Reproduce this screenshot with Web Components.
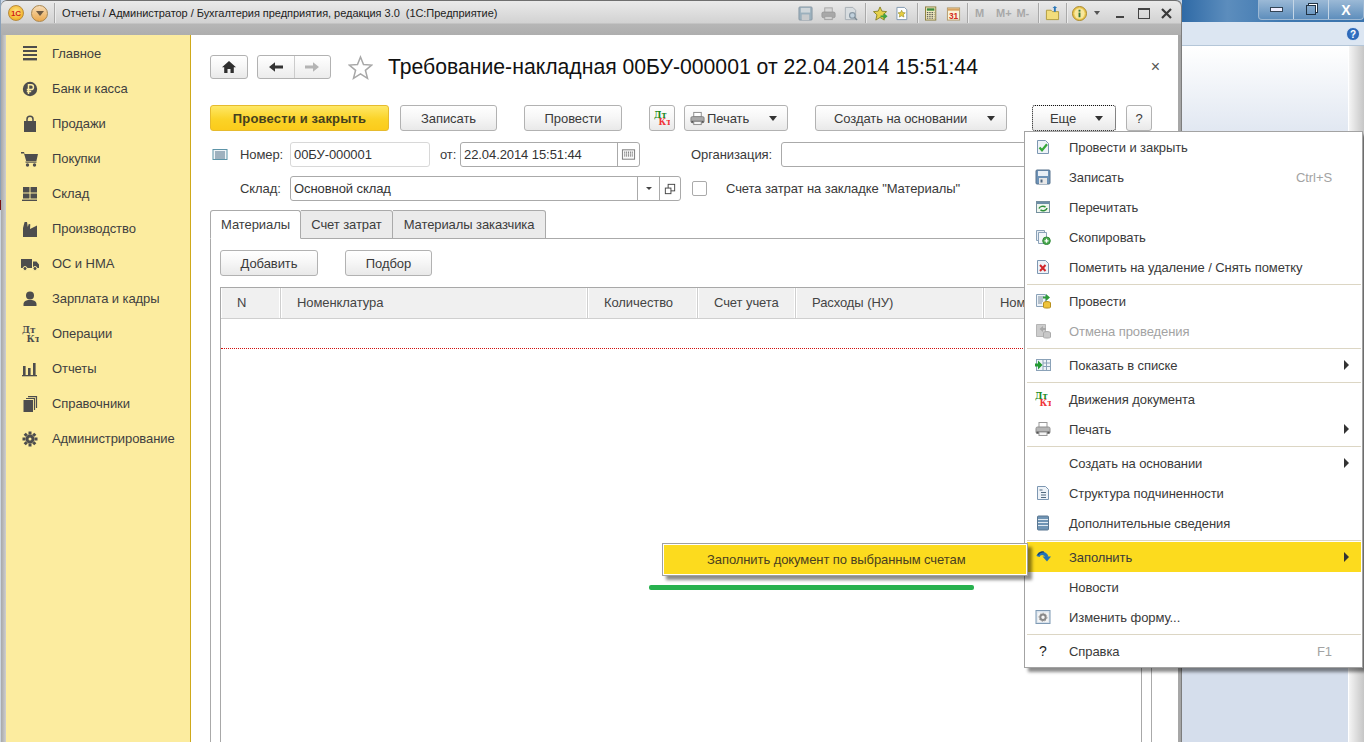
<!DOCTYPE html>
<html lang="ru"><head><meta charset="utf-8"><title>1С</title>
<style>
html,body{margin:0;padding:0;height:100%;overflow:hidden;background:#fff}
body{font:13px "Liberation Sans",Arial,sans-serif;color:#3a3a3a;letter-spacing:-.08px}
</style></head><body>
<x-desktop>
  <x-window>
    <x-titlebar slot="title">Отчеты / Администратор / Бухгалтерия предприятия, редакция 3.0&nbsp; (1С:Предприятие)</x-titlebar>
    <x-sidebar>
      <x-nav icon="main">Главное</x-nav>
      <x-nav icon="ruble">Банк и касса</x-nav>
      <x-nav icon="bag">Продажи</x-nav>
      <x-nav icon="cart">Покупки</x-nav>
      <x-nav icon="stock">Склад</x-nav>
      <x-nav icon="factory">Производство</x-nav>
      <x-nav icon="truck">ОС и НМА</x-nav>
      <x-nav icon="person">Зарплата и кадры</x-nav>
      <x-nav icon="dtkt">Операции</x-nav>
      <x-nav icon="bars">Отчеты</x-nav>
      <x-nav icon="books">Справочники</x-nav>
      <x-nav icon="gear">Администрирование</x-nav>
    </x-sidebar>
    <x-form></x-form>
  </x-window>
  <x-backwin></x-backwin>
  <x-menu>
    <x-mi icon="m-check">Провести и закрыть</x-mi>
    <x-mi icon="m-save" key="Ctrl+S">Записать</x-mi>
    <x-mi icon="m-reread">Перечитать</x-mi>
    <x-mi icon="m-copy">Скопировать</x-mi>
    <x-mi icon="m-del">Пометить на удаление / Снять пометку</x-mi>
    <x-sep></x-sep>
    <x-mi icon="m-post">Провести</x-mi>
    <x-mi icon="m-unpost" disabled>Отмена проведения</x-mi>
    <x-sep></x-sep>
    <x-mi icon="m-list" arrow>Показать в списке</x-mi>
    <x-sep></x-sep>
    <x-mi icon="m-dtkt">Движения документа</x-mi>
    <x-mi icon="m-print" arrow>Печать</x-mi>
    <x-sep></x-sep>
    <x-mi arrow>Создать на основании</x-mi>
    <x-mi icon="m-tree">Структура подчиненности</x-mi>
    <x-mi icon="m-info">Дополнительные сведения</x-mi>
    <x-sep></x-sep>
    <x-mi icon="m-fill" arrow active>Заполнить</x-mi>
    <x-mi>Новости</x-mi>
    <x-mi icon="m-form">Изменить форму...</x-mi>
    <x-sep></x-sep>
    <x-mi icon="m-q" key="F1">Справка</x-mi>
  </x-menu>
  <x-submenu>Заполнить документ по выбранным счетам</x-submenu>
  <x-underline></x-underline>
</x-desktop>
<script>
const G='#4d4d4d';
const ICONS={
 main:`<g fill="${G}"><rect x="2" y="1" width="14" height="2"/><rect x="2" y="5" width="14" height="2"/><rect x="2" y="9" width="14" height="2"/><rect x="2" y="13" width="14" height="2.4"/></g>`,
 ruble:`<circle cx="9" cy="9" r="7.2" fill="${G}"/><path d="M7.5 14V4.8h2.6a2.3 2.3 0 0 1 0 4.7H5.8M5.8 11.6h4.4" fill="none" stroke="#fcec9f" stroke-width="1.5"/>`,
 bag:`<path d="M3 6h12v11H3z" fill="${G}"/><path d="M6 8V4.3a3 3 0 0 1 6 0V8" fill="none" stroke="${G}" stroke-width="1.5"/>`,
 cart:`<path d="M0 2h3l.6 2H17l-1.6 7H5.2L3 3.4H0z" fill="${G}"/><rect x="4.5" y="11.5" width="11" height="1.2" fill="${G}"/><circle cx="6.5" cy="15" r="1.7" fill="${G}"/><circle cx="13.5" cy="15" r="1.7" fill="${G}"/>`,
 stock:`<g fill="${G}"><rect x="2" y="2" width="6.5" height="5.5"/><rect x="9.5" y="2" width="6.5" height="5.5"/><rect x="2" y="8.5" width="6.5" height="5"/><rect x="9.5" y="8.5" width="6.5" height="5"/><rect x="1" y="14.6" width="15" height="1.4"/></g>`,
 factory:`<path d="M2 17V8l1.6-6H6l.8 5 .9-3 1.6.3L9 9l7-3.5V17z" fill="${G}"/>`,
 truck:`<path d="M0 4h11v9H0zM12 6.5h3.5L18 9.5V13h-6z" fill="${G}"/><circle cx="4" cy="13.5" r="2" fill="${G}" stroke="#fcec9f"/><circle cx="14" cy="13.5" r="2" fill="${G}" stroke="#fcec9f"/>`,
 person:`<circle cx="9" cy="5.5" r="4" fill="${G}"/><path d="M2.5 16v-2c0-2.5 2.5-3.6 4.5-4h4c2 .4 4.5 1.5 4.5 4v2z" fill="${G}"/>`,
 dtkt:`<text x="1" y="8" font-size="9" font-weight="700" font-family="DejaVu Serif" letter-spacing="0" fill="${G}">Дт</text><text x="5.500" y="16.500" font-size="9" font-weight="700" font-family="DejaVu Serif" letter-spacing="0" fill="${G}">Кт</text>`,
 bars:`<g fill="${G}"><rect x="2" y="6" width="2.6" height="9"/><rect x="7" y="8" width="2.6" height="7"/><rect x="12" y="3" width="2.6" height="12"/><rect x="1" y="15" width="15" height="1.3"/></g>`,
 books:`<path d="M2.5 5h9.5v12H2.5z" fill="${G}"/><path d="M5 3.5h8.5V15M7 1.6h8.5V13" fill="none" stroke="${G}" stroke-width="1.2"/>`,
 gear:`<path d="M9 6a3 3 0 1 0 0 6 3 3 0 0 0 0-6z" fill="none" stroke="${G}" stroke-width="3"/><g stroke="${G}" stroke-width="3"><path d="M9 1.5v3M9 13.5v3M1.5 9h3M13.5 9h3M3.7 3.7l2.1 2.1M12.2 12.2l2.1 2.1M3.7 14.3l2.1-2.1M12.2 5.800l2.1-2.100"/></g>`,
 home:`<path d="M8 2l7 6.300h-2.200V14H9.500v-4h-3v4H3.200V8.300H1z" fill="#2f2f2f"/>`,
 back:`<path d="M1 8l6-4.800V6.400h8v3.200H7v3.200z" fill="#333"/>`,
 fwd:`<path d="M15 8L9 3.200V6.400H1v3.200h8v3.200z" fill="#b4b4b4"/>`,
 star:`<path d="M12.500 2l3 7.600 8.200.5-6.300 5.200 2.100 8-7-4.400-7 4.400 2.100-8L1.300 10.100l8.200-.5z" fill="#fff" stroke="#a8a8a8" stroke-width="1.500"/>`,
 doc:`<rect x="1" y="2.500" width="14" height="10" fill="#eef4f7" stroke="#5d94a8"/><path d="M3 5h10M3 7h10M3 9h10M3 11h10" stroke="#4f6f86"/>`,
 cal:`<rect x="1.500" y="3" width="13" height="10" fill="#f8f8f8" stroke="#777"/><path d="M3.500 5.500h9M3.500 7.500h9M3.500 9.500h9" stroke="#333" stroke-dasharray="1 1"/>`,
 open:`<rect x="5.500" y="2.500" width="7" height="7" fill="#fff" stroke="#444"/><rect x="2.500" y="6.500" width="6" height="6" fill="#fff" stroke="#444"/>`,
 print:`<rect x="4" y="1.500" width="8" height="5" fill="#fff" stroke="#888"/><rect x="1" y="6" width="14" height="6.500" rx="1.500" fill="#a9a9a9" stroke="#808080"/><rect x="1.500" y="10.500" width="13" height="2" fill="#5a5a5a"/><rect x="4" y="11" width="8" height="3.500" fill="#f4f4f4" stroke="#888"/>`,
 'm-dtkt':`<text x="0" y="7.500" font-size="8.500" font-weight="700" font-family="DejaVu Serif" letter-spacing="0" fill="#1c8a1c">Дт</text><text x="4.500" y="15" font-size="8.500" font-weight="700" font-family="DejaVu Serif" letter-spacing="0" fill="#f0353a">Кт</text>`,
 'm-check':`<path d="M2.500 1.500h8l3 3v10h-11z" fill="#eef3f8" stroke="#7d97b2"/><path d="M4.500 8.500l2.500 2.800 5-6" fill="none" stroke="#35a83a" stroke-width="2.200"/>`,
 'm-save':`<rect x="1" y="1" width="14" height="14" rx="1" fill="#6d93b8" stroke="#58728d"/><rect x="3" y="2" width="10" height="5" fill="#e8eff6"/><rect x="4" y="9" width="8" height="6" fill="#e7e7e7"/><rect x="5.500" y="10.500" width="2" height="3" fill="#4e6781"/>`,
 'm-reread':`<rect x="1.500" y="2.500" width="13" height="11" fill="#eef6ee" stroke="#75909f"/><rect x="2" y="3" width="12" height="2" fill="#6d8ea6"/><path d="M4 9.500a4 3 0 0 1 6.500-1.500M12 9a4 3 0 0 1-6.500 2" fill="none" stroke="#2f8f3a" stroke-width="1.500"/>`,
 'm-copy':`<path d="M1.500 1.500h8v10h-8z" fill="#e8eef4" stroke="#8ba2b8"/><path d="M3.500 3.500h8v11h-8z" fill="#f3f6f9" stroke="#8ba2b8"/><circle cx="11.500" cy="11.800" r="3.800" fill="#4aa84f" stroke="#2f8a36"/><path d="M9.500 11.800h4M11.500 9.800v4" stroke="#fff" stroke-width="1.300"/>`,
 'm-del':`<path d="M2.500 1.500h8l3 3v10h-11z" fill="#eef3f8" stroke="#7d97b2"/><path d="M5 6l5.500 6M10.500 6L5 12" stroke="#d1272b" stroke-width="2"/>`,
 'm-post':`<path d="M1.500 1.500h9v12h-9z" fill="#eef3f8" stroke="#8ba2b8"/><path d="M3 4h6M3 6h5M3 8h5M3 10h4" stroke="#7d8ea0"/><path d="M8 3.500h3V1l4 3.500-4 3.500V5.500H8z" fill="#2f9c3a"/><ellipse cx="12" cy="10" rx="3.500" ry="1.500" fill="#eec33c" stroke="#b78f1e"/><path d="M8.500 10v4.300c0 1 7 1 7 0V10" fill="#eec33c" stroke="#b78f1e"/>`,
 'm-unpost':`<path d="M1.500 1.500h9v12h-9z" fill="#ccc" stroke="#b5b5b5"/><path d="M8 3l-3.500 3L8 9V7h3V5H8z" fill="#a8a8a8"/><ellipse cx="12" cy="10" rx="3.500" ry="1.500" fill="#c8c8c8" stroke="#aaa"/><path d="M8.500 10v4.300c0 1 7 1 7 0V10" fill="#c8c8c8" stroke="#aaa"/>`,
 'm-list':`<rect x="1.500" y="2.500" width="14" height="11" fill="#eef3f8" stroke="#8ba2b8"/><path d="M8 2.500v11M11.500 2.500v11M8 6h7.500M8 9.500h7.500" stroke="#8ba2b8"/><path d="M0 6.500h3V3.500l4.500 4.500-4.500 4.500V9.500H0z" fill="#239a32"/>`,
 'm-print':`<rect x="4" y="1.500" width="8" height="5" fill="#fff" stroke="#999"/><rect x="1" y="6" width="14" height="6.500" rx="1.500" fill="#b5b5b5" stroke="#909090"/><rect x="1.500" y="10.500" width="13" height="2" fill="#555"/><rect x="4" y="11" width="8" height="3.500" fill="#f4f4f4" stroke="#999"/>`,
 'm-tree':`<path d="M2.500 1.500h8l3 3v10h-11z" fill="#eef3f8" stroke="#7d97b2"/><path d="M4.500 5h3M6 7.500h5M6 10h5M6 12.500h5" stroke="#51697f"/>`,
 'm-info':`<rect x="2.500" y="1" width="11" height="14" rx="1" fill="#6f94b4" stroke="#5a7791"/><path d="M3 4.500h10M3 7.500h10M3 10.500h10" stroke="#dfe9f1"/>`,
 'm-fill':`<path d="M3 7.500C4 3.500 10 3 12 8" fill="none" stroke="#2373b3" stroke-width="3.200"/><path d="M3 6C4.500 3 7 2.500 9 3" fill="none" stroke="#173f66" stroke-width="1.200"/><path d="M7.500 7.500h8.500l-4 5z" fill="#2373b3"/>`,
 'm-form':`<rect x="1" y="1.500" width="14" height="13" fill="#d8e2ec" stroke="#7f9ab4"/><rect x="2.500" y="3.500" width="11" height="9.500" fill="#f5f5f5"/><circle cx="8" cy="8.300" r="2.700" fill="none" stroke="#888" stroke-width="2"/><circle cx="8" cy="8.300" r="4" fill="none" stroke="#999" stroke-width="1" stroke-dasharray="1.500 1.500"/>`,
 'm-q':`<text x="4" y="13" font-size="14" font-family="Liberation Sans" fill="#222">?</text>`,
 't-save':`<rect x="1" y="1" width="14" height="14" rx="1" fill="#9bb0bd" stroke="#8a9aa5"/><rect x="3" y="2" width="10" height="5" fill="#cfd6da"/><rect x="4" y="9" width="8" height="6" fill="#c8cbcd"/>`,
 't-print':`<rect x="4" y="2" width="8" height="5" fill="#d8d8d8" stroke="#a5a5a5"/><rect x="1" y="6.500" width="14" height="6" rx="1.500" fill="#a8a8a8" stroke="#9a9a9a"/><rect x="4" y="11" width="8" height="3.500" fill="#d0d0d0" stroke="#a0a0a0"/>`,
 't-prev':`<path d="M2.500 1.500h8l3 3v10h-11z" fill="#d8dde0" stroke="#a5adb3"/><circle cx="10" cy="10" r="3" fill="#c0d0dc" stroke="#8a99a5" stroke-width="1.300"/><path d="M12 12l3 3" stroke="#7a8893" stroke-width="1.500"/>`,
 't-star':`<path d="M7.500 1l2 4.500 5 .5-3.700 3.400L12 15l-4.500-2.800L3 15l1.200-5.600L.5 6l5-.5z" fill="#e6d14a" stroke="#8b8424"/><path d="M8 10h3.500V7.500l4 3.500-4 3.500V12H8z" fill="#42a242"/>`,
 't-dstar':`<path d="M1 1.500h8l2.500 2.500v10.500H1z" fill="#fff" stroke="#7f98b0"/><path d="M6 4.500l1.200 2.500 2.700.3-2 1.800.6 2.700L6 10.500l-2.500 1.300.6-2.700-2-1.800 2.700-.3z" fill="#e6cd40" stroke="#8b8424" stroke-width=".6"/>`,
 't-calc':`<rect x=".5" y="1" width="11" height="14" fill="#efe8bd" stroke="#8a7d3c"/><rect x="2" y="2.500" width="8" height="2.500" fill="#3c8a3c"/><path d="M2 7h8M2 9h8M2 11h8M2 13h8" stroke="#444" stroke-dasharray="1.500 1"/>`,
 't-cal':`<rect x="1.500" y="2" width="13" height="13" fill="#fbf3d8" stroke="#b0996a"/><rect x="2" y="2.500" width="12" height="2.500" fill="#d8a360"/><text x="8" y="14" text-anchor="middle" font-size="9" font-weight="700" font-family="Liberation Sans" fill="#d32a20">31</text>`,
 't-folder':`<path d="M1.500 4.500h5l1.500 1.500h6.500v8.500h-13z" fill="#f2dd7b" stroke="#b09b3b"/><path d="M9.500 6V2H8L10.500 0 13 2h-1.500v4z" fill="#2b77b8"/>`,
 't-info':`<circle cx="8" cy="8" r="7.500" fill="#e9c64f" stroke="#a88528"/><circle cx="8" cy="8" r="5.500" fill="#f8e79e"/><rect x="7" y="7" width="2" height="5" fill="#37783a"/><rect x="7" y="4" width="2" height="2" fill="#37783a"/>`,
};
const ic=(n,s=16,vb=16)=>`<svg width="${s}" height="${s}" viewBox="0 0 ${vb} ${vb}" style="display:block;flex:none">${ICONS[n]||''}</svg>`;
const def=(name,fn)=>customElements.define(name,class extends HTMLElement{
  connectedCallback(){ if(this.shadowRoot) return; this.attachShadow({mode:'open'}).innerHTML=fn(this); }
});
def('x-desktop',()=>`<style>:host{display:flex;position:relative;width:1364px;height:742px;overflow:hidden;background:linear-gradient(#c9d6e5,#c9d6e5)}
.edge{flex:none;width:1px;background:linear-gradient(#8aa0b8 0 200px,#7a1010 200px 210px,#cbd5e0 210px)}</style><div class="edge"></div><slot></slot>`);
def('x-window',()=>`<style>:host{display:flex;flex-direction:column;flex:none;width:1181px;height:742px;box-sizing:border-box;border-radius:6px 6px 0 0;background:linear-gradient(90deg,#a8a8a8,#cfcfcf 5px,#aaa 1175px,#a4a4a4);border-top:1px solid #6f6f6f;border-right:1px solid #7d7d7d}
.body{flex:1;display:flex;min-height:0;margin-left:5px;margin-right:3px}
::slotted(x-titlebar){flex:none}</style><slot name="title"></slot><div class="body"><slot></slot></div>`);
def('x-titlebar',()=>{
 const it=(n,ml,s=15)=>`<span style="margin-left:${ml}px">${ic(n,s)}</span>`;
 const sep=(ml)=>`<i class="sep" style="margin-left:${ml}px"></i>`;
 const mm=(t,ml)=>`<b class="m" style="margin-left:${ml}px">${t}</b>`;
 return `<style>:host{display:block;height:34px;background:linear-gradient(#eaeaea 0,#d2d2d2 22px,#b6b6b6 23px,#aeaeae 34px);border-radius:6px 6px 0 0}
.r{display:flex;align-items:center;height:24px;padding-left:7px;box-sizing:border-box}
.logo{width:14px;height:14px;border-radius:50%;background:radial-gradient(circle at 50% 40%,#ffe98a,#f3b42c 70%,#c98a22);border:1px solid #b98b3a;display:flex;align-items:center;justify-content:center;font:700 8px "Liberation Sans",sans-serif;color:#d21d14;flex:none}
.mn{width:15px;height:15px;border-radius:50%;margin-left:7px;background:linear-gradient(#f7dcb6,#eba94e);border:1px solid #a98750;flex:none;display:flex;align-items:center;justify-content:center}
.mn:after{content:"";border:4px solid transparent;border-top:5px solid #6e5a42;border-bottom:0}
.sep{flex:none;width:1px;height:20px;background:#a9a9a9;box-shadow:1px 0 #ececec}
.t{margin-left:7px;font-size:11px;letter-spacing:-.04px;color:#222;white-space:nowrap;width:736px;overflow:hidden;flex:none}
.m{font-size:11px;font-weight:700;color:#a8a8a8;flex:none;white-space:nowrap}
.dd{margin-left:7px;width:0;height:0;border:3px solid transparent;border-top:4px solid #555;border-bottom:0;flex:none}
</style><div class="r"><span class="logo">1С</span><span class="mn"></span>${sep(6)}<span class="t"><slot></slot></span>
${it('t-save',0)}${it('t-print',8)}${it('t-prev',7)}${sep(7)}${it('t-star',7)}${it('t-dstar',8)}${sep(6)}${it('t-calc',7)}${it('t-cal',6)}${sep(6)}${mm('M',7)}${mm('M+',12)}${mm('M-',5)}${sep(9)}${it('t-folder',6)}${sep(6)}${it('t-info',5)}<span class="dd"></span>
<span style="margin-left:16px;width:8px;height:2px;background:#444;margin-top:7px;flex:none"></span>
<span style="margin-left:14px;width:10px;height:8px;border:1px solid #444;border-top-width:2px;flex:none"></span>
<svg width="11" height="11" viewBox="0 0 11 11" style="margin-left:11px;flex:none"><path d="M1 1l9 9M10 1l-9 9" stroke="#3a3a3a" stroke-width="2.200"/></svg></div>`});
def('x-sidebar',()=>`<style>:host{display:block;flex:none;width:185px;box-sizing:border-box;background:#fcec9f;border-right:1px solid #cfa91a;padding-top:1px}</style><slot></slot>`);
def('x-nav',(e)=>`<style>:host{display:flex;align-items:center;height:35px;padding-left:15px;gap:13px;color:#3f3f3f;white-space:nowrap}</style>${ic(e.getAttribute('icon'),18,18)}<span><slot></slot></span>`);
def('x-btn',(e)=>`<style>:host{display:flex;flex:none;align-items:center;justify-content:center;box-sizing:border-box;height:26px;border:1px solid #b2b2b2;border-radius:3px;background:linear-gradient(#fff,#f7f7f7 45%,#e9e9e9);color:#3a3a3a;white-space:nowrap;gap:6px}
:host([kind=main]){background:linear-gradient(#fee866,#fbd327 55%,#fbcb1b);border-color:#e6bb2e;font-weight:700;color:#45401f;letter-spacing:.17px}
:host([kind=focus]){border:1px dotted #111}
</style><slot></slot>`);
def('x-caret',()=>`<style>:host{display:block;flex:none;width:0;height:0;border:4.500px solid transparent;border-top:5px solid #333;border-bottom:0;margin-top:1px}</style>`);
def('x-input',(e)=>{
 const buttons=(e.getAttribute('buttons')||'').split(' ').filter(Boolean).map(b=>{
  if(b==='dd')return `<span class="b" style="width:21px"><span class="c"></span></span>`;
  if(b==='open')return `<span class="b" style="width:20px">${ic('open',14,15)}</span>`;
  return `<span class="b" style="width:21px">${ic('cal',15)}</span>`;}).join('');
 return `<style>:host{display:flex;flex:none;box-sizing:border-box;height:25px;border:1px solid #aaa;border-radius:3px;background:#fff;align-items:stretch;color:#333;white-space:nowrap}
:host([ro]){border-color:#d8d8d8}
.v{flex:1;padding-left:3px;display:flex;align-items:center;overflow:hidden}
.b{display:flex;align-items:center;justify-content:center;border-left:1px solid #aaa;flex:none}
.c{width:0;height:0;border:3px solid transparent;border-top:3px solid #444;border-bottom:0}
</style><span class="v"><slot></slot></span>${buttons}`});
def('x-tab',()=>`<style>:host{display:flex;flex:none;align-items:center;justify-content:center;box-sizing:border-box;height:29px;border:1px solid #aaa;border-left:0;border-radius:0 3px 0 0;background:#ebebeb;color:#3d3d3d;white-space:nowrap}
:host([active]){background:#fff;border-left:1px solid #aaa;border-bottom-color:#fff;border-radius:3px 3px 0 0}</style><slot></slot>`);
def('x-th',(e)=>`<style>:host{display:flex;flex:none;align-items:center;box-sizing:border-box;background:#f0f0f0;border-right:1px solid #cfcfcf;box-shadow:inset -1px 0 #fff,inset 1px 0 #fff;height:100%;padding:0 0 2px 16px;color:#444;white-space:nowrap;overflow:hidden}</style><slot></slot>`);
def('x-form',()=>`<style>:host{display:flex;flex-direction:column;flex:1;min-width:0;background:#fff;padding:20px 26px 0 19px;box-sizing:border-box;color:#3a3a3a}
.row{display:flex;align-items:center;flex:none;white-space:nowrap}
.head{height:24px}
.title{font-size:21.2px;letter-spacing:0;color:#111;margin-left:15px;white-space:nowrap}
.x{margin-left:auto;margin-right:-8px;color:#555;font-size:16px;line-height:16px}
.nav{display:flex;width:74px;height:24px;box-sizing:border-box;border:1px solid #b2b2b2;border-radius:3px;margin-left:9px;background:linear-gradient(#fff,#ececec)}
.nav span{flex:1;display:flex;align-items:center;justify-content:center}
.nav span+span{border-left:1px solid #ccc}
.bar{height:26px;margin-top:26px}
.f1{height:25px;margin-top:11px}
.f2{height:25px;margin-top:9px}
.tabs{display:flex;margin-top:9px;flex:none}
.fill{flex:1;border-bottom:1px solid #aaa}
.panel{flex:1;min-height:0;display:flex;flex-direction:column;border:1px solid #aaa;border-top:0;border-bottom:0;padding:11px 9px 0}
.t{flex:1;margin-top:11px;border:1px solid #a8a8a8;border-bottom:0;display:flex;flex-direction:column;min-height:0}
.hd{display:flex;height:30px;flex:none;border-bottom:1px solid #cfcfcf;overflow:hidden}
.rw{height:29px;flex:none;border-bottom:1px dotted #d01010}
.cb{width:15px;height:15px;box-sizing:border-box;border:1px solid #aaa;border-radius:2px;flex:none}
</style>
<div class="row head">
 <x-btn style="width:38px;height:24px">${ic('home',16)}</x-btn>
 <div class="nav"><span>${ic('back',16)}</span><span>${ic('fwd',16)}</span></div>
 <svg width="25" height="25" viewBox="0 0 25 25" style="margin-left:17px;flex:none">${ICONS.star}</svg>
 <span class="title">Требование-накладная 00БУ-000001 от 22.04.2014 15:51:44</span>
 <span class="x">×</span>
</div>
<div class="row bar">
 <x-btn kind="main" style="width:179px">Провести и закрыть</x-btn>
 <x-btn style="width:97px;margin-left:11px">Записать</x-btn>
 <x-btn style="width:98px;margin-left:27px">Провести</x-btn>
 <x-btn style="width:26px;margin-left:27px">${ic('m-dtkt',16)}</x-btn>
 <x-btn style="width:104px;margin-left:9px;justify-content:flex-start;padding-left:5px;gap:2px">${ic('print',15)}<span>Печать</span><x-caret style="margin-left:18px"></x-caret></x-btn>
 <x-btn style="width:192px;margin-left:27px;justify-content:flex-start;padding-left:18px;gap:20px">Создать на основании<x-caret></x-caret></x-btn>
 <x-btn kind="focus" style="width:84px;margin-left:25px;justify-content:flex-start;padding-left:17px;gap:19px">Еще<x-caret></x-caret></x-btn>
 <x-btn style="width:26px;margin-left:10px">?</x-btn>
</div>
<div class="row f1">
 <span style="margin-left:2px">${ic('doc',16)}</span>
 <span style="margin-left:12px;width:50px">Номер:</span>
 <x-input ro style="width:140px">00БУ-000001</x-input>
 <span style="margin-left:10px;width:20px">от:</span>
 <x-input buttons="cal" style="width:180px">22.04.2014 15:51:44</x-input>
 <span style="margin-left:51px;width:90px">Организация:</span>
 <x-input style="width:370px"></x-input>
</div>
<div class="row f2">
 <span style="margin-left:30px;width:50px">Склад:</span>
 <x-input buttons="dd open" style="width:391px">Основной склад</x-input>
 <span class="cb" style="margin-left:11px"></span>
 <span style="margin-left:19px">Счета затрат на закладке "Материалы"</span>
</div>
<div class="tabs">
 <x-tab active style="width:91px">Материалы</x-tab>
 <x-tab style="width:92px">Счет затрат</x-tab>
 <x-tab style="width:153px">Материалы заказчика</x-tab>
 <span class="fill"></span>
</div>
<div class="panel">
 <div class="row" style="height:26px">
  <x-btn style="width:98px">Добавить</x-btn>
  <x-btn style="width:87px;margin-left:27px">Подбор</x-btn>
 </div>
 <div class="t">
  <div class="hd">
   <x-th style="width:60px">N</x-th>
   <x-th style="width:307px">Номенклатура</x-th>
   <x-th style="width:110px">Количество</x-th>
   <x-th style="width:98px">Счет учета</x-th>
   <x-th style="width:188px">Расходы (НУ)</x-th>
   <x-th style="width:157px">Ном</x-th>
  </div>
  <div class="rw"></div>
 </div>
</div>`);
def('x-backwin',()=>`<style>:host{display:flex;flex-direction:column;flex:1;min-width:0;background:#d5deec;position:relative}
.top{height:22px;flex:none;background:linear-gradient(90deg,#2f6aa6,#5c8dbd 25%,#3f78b0 55%,#3a73ad);display:flex;justify-content:flex-end}
.cap{display:flex;height:20px;width:106px;box-sizing:border-box;border:1px solid #9db8d3;border-top:0;border-radius:0 0 4px 4px;background:linear-gradient(#9bb9d6,#5e8ebc);align-items:center}
.cap span{flex:1;height:100%;display:flex;align-items:center;justify-content:center;border-left:1px solid #c5d6e6}
.cap span:first-child{border:0}
.bar{height:23px;flex:none;background:#dce6f2;border-bottom:1px solid #b4c6d8;display:flex;justify-content:flex-end;align-items:center;padding-right:4px}
.help{width:14px;height:14px;border-radius:50%;background:radial-gradient(circle,#3f7fd0,#1d58a8);color:#fff;font:700 10px/14px "Liberation Sans",sans-serif;text-align:center;border:1px solid #cfe0f4;box-sizing:border-box}
.main{flex:1;display:flex}
.c{flex:1;background:linear-gradient(#fff 0,#d5deec 120px);border-right:1px solid #fff}
.fr{width:15px;flex:none;background:linear-gradient(90deg,#f4f4f4,#c6c6c6)}
</style><div class="top"><div class="cap"><span><i style="display:block;width:11px;height:3px;background:#eef;border:1px solid #345"></i></span><span><i style="display:block;width:8px;height:8px;border:1px solid #234;box-shadow:2px -2px 0 -1px #fff,2px -2px 0 0 #234"></i></span><span style="color:#fff;font:700 14px 'Liberation Sans',sans-serif">X</span></div></div>
<div class="bar"><span class="help">?</span></div><div class="main"><div class="c"></div><div class="fr"></div></div>`);
def('x-menu',()=>`<style>:host{display:block;position:absolute;left:1024px;top:131px;width:339px;box-sizing:border-box;background:#fff;border:1px solid #a3a3a3;box-shadow:4px 4px 3px rgba(0,0,0,.45);padding:0 0 1px;color:#3a3a3a}</style><slot></slot>`);
def('x-mi',(e)=>{const n=e.getAttribute('icon'),k=e.getAttribute('key');
 return `<style>:host{display:flex;align-items:center;height:30px;padding-left:8px;position:relative;white-space:nowrap;margin:0 1px 0 2px}
:host([active]){background:#fcdb1e}
:host([disabled]){color:#a3a3a3}
.i{width:16px;height:16px;flex:none;margin-right:18px}
.k{position:absolute;right:29px;color:#a3a3a3}
.a{position:absolute;right:12px;width:0;height:0;border:5px solid transparent;border-left:5px solid #333;border-right:0}
</style><span class="i">${n?ic(n,16):''}</span><span><slot></slot></span>${k?`<span class="k">${k}</span>`:''}${e.hasAttribute('arrow')?'<span class="a"></span>':''}`});
def('x-sep',()=>`<style>:host{display:block;height:1px;margin:2px 1px 1px 2px;background:#dcd6c4}</style>`);
def('x-submenu',()=>`<style>:host{display:flex;align-items:center;position:absolute;left:662px;top:543px;width:366px;height:33px;box-sizing:border-box;padding-left:44px;background:#fcdb1e;border:1px solid #a0a0a0;box-shadow:inset 0 0 0 1px #fff,4px 4px 3px rgba(0,0,0,.45);color:#4a4020;white-space:nowrap}</style><slot></slot>`);
def('x-underline',()=>`<style>:host{display:block;position:absolute;left:649px;top:585px;width:325px;height:5px;border-radius:2px;background:#27b14e}</style>`);
</script>
</body></html>
